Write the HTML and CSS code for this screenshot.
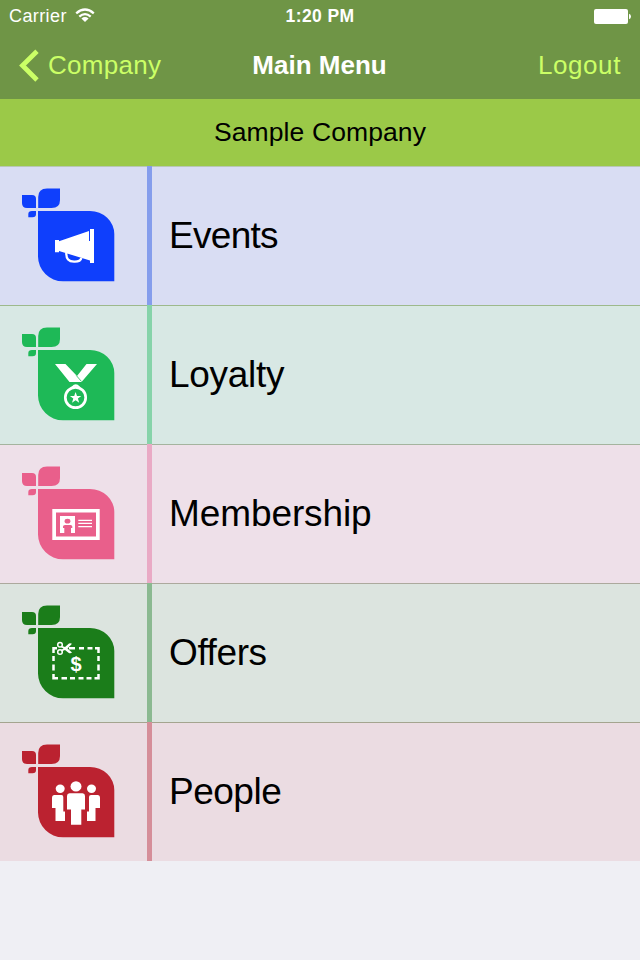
FILE: index.html
```
<!DOCTYPE html>
<html lang="en">
<head>
<meta charset="utf-8">
<title>Main Menu</title>
<link rel="stylesheet" href="styles.css">
</head>
<body>
<svg class="defs" width="0" height="0">
  <symbol id="leaf" viewBox="0 0 147 139">
    <path d="M38 45H90A24.300 23 0 0 1 114.300 68V115.300H63A25 25 0 0 1 38 90.500Z"/>
    <path d="M38.200 42V31Q38.200 22.500 47 22.500H60V34Q60 42 51.500 42Z"/>
    <path d="M22 29H32Q36 29 36 33V42H27Q22 42 22 37Z"/>
    <path d="M28.300 51.200V48Q28.300 45 32 45H36V48Q36 51.200 32.500 51.200Z"/>
  </symbol>
</svg>
<header class="top">
  <div class="status">
    <div class="carrier"><span>Carrier</span>
      <svg width="20" height="15" viewBox="0 0 20 15" fill="none" stroke="#fff" stroke-width="2.300"><path d="M1.200 5.300Q10 -2.300 18.800 5.300M4.300 8.600Q10 3.600 15.700 8.600"/><path d="M6.400 10.400Q10 7.600 13.600 10.400L10 14Z" fill="#fff" stroke="none"/></svg>
    </div>
    <span class="time">1:20 PM</span>
    <svg class="battery" width="38" height="15" viewBox="0 0 38 15" fill="#fff"><rect x="0" y="0" width="34" height="15" rx="2"/><path d="M35 4.800Q37 5.500 37 7.500T35 10.200Z"/></svg>
  </div>
  <nav class="nav">
    <a class="back"><svg width="22" height="34" viewBox="0 0 22 34" fill="none" stroke="#cbff66" stroke-width="4.800"><path d="M19 2.300L4.500 16.500L19 31"/></svg><span>Company</span></a>
    <h1>Main Menu</h1>
    <a class="logout">Logout</a>
  </nav>
</header>
<div class="company"><span>Sample Company</span></div>
<main>
  <section class="row events">
    <svg class="icon" viewBox="0 0 147 139"><use href="#leaf"/>
      <g fill="#fff"><path d="M55 74H59V75.300L89 65V75H90V63H94V97H90V94.500L59 85V86.300H55Z"/><path d="M66.300 87Q66 95.500 74 95.700Q80.500 96 81.300 92" fill="none" stroke="#fff" stroke-width="2.300"/></g>
    </svg><span>Events</span>
  </section>
  <section class="row loyalty">
    <svg class="icon" viewBox="0 0 147 139"><use href="#leaf"/>
      <path fill="#fff" d="M55 59H65.500L77 71L86.500 59H97L81.500 77H69.500Z"/>
      <path d="M76.300 70.500L81.500 76.500" stroke="#1eb957" stroke-width=".8"/>
      <g fill="none" stroke="#fff"><circle cx="75.500" cy="92.500" r="10.200" stroke-width="2.700"/><path d="M72.500 83V82Q75.800 78.500 79 82V83" stroke-width="1.800"/></g>
      <path fill="#fff" d="M75.600 87L77 91H81.300L77.900 93.500L79.200 97.800L75.600 95.200L72 97.800L73.300 93.500L69.900 91H74.200Z"/>
    </svg><span>Loyalty</span>
  </section>
  <section class="row membership">
    <svg class="icon" viewBox="0 0 147 139"><use href="#leaf"/>
      <path fill="#fff" fill-rule="evenodd" d="M52.300 65H99.700V96H52.300ZM56 68.500V92.500H96V68.500Z"/>
      <path fill="#fff" d="M60 72H75V89H60Z"/>
      <ellipse cx="67.500" cy="77.200" rx="2.900" ry="2.400" fill="currentColor"/>
      <path d="M64.300 89V84H63V82.500Q63 80.900 65 80.900H70.500Q72.300 80.900 72.300 82.500V84H71V89Z" fill="currentColor"/>
      <path d="M78.300 76.300H92M78.300 79.300H92M78.300 82.600H92" stroke="#fff" stroke-width="1.300"/>
    </svg><span>Membership</span>
  </section>
  <section class="row offers">
    <svg class="icon" viewBox="0 0 147 139"><use href="#leaf"/>
      <g fill="none" stroke="#fff" stroke-width="2.500">
        <path d="M53.500 70V65.300H57M95 65.300H98.500V70M98.500 91V95.300H94.500M58 95.300H53.500V91"/>
        <path d="M69 65.300H75M79 65.300H84M87.500 65.300H92.500M61.500 95.300H67M70 95.300H75M78.500 95.300H83.500M86.500 95.300H91.500M53.500 73V78M53.500 81.500V87.500M98.500 73V78M98.500 81.500V87.500"/>
      </g>
      <g fill="none" stroke="#fff" stroke-width="1.500"><circle cx="60" cy="61.800" r="2.300"/><circle cx="60" cy="69" r="2.300"/></g>
      <path d="M61.500 62.800L65 64L69 60.500Q70.500 59.800 72 60.800L67.500 65.500L72 69.500Q70.500 71 68.500 69.800L65 67L61.500 68.500L61 67L63.500 65.500L61 64.300Z" fill="#fff"/>
      <text x="76" y="88" text-anchor="middle" fill="#fff">$</text>
    </svg><span>Offers</span>
  </section>
  <section class="row people">
    <svg class="icon" viewBox="0 0 147 139"><use href="#leaf"/>
      <g fill="#fff"><ellipse cx="76" cy="64.400" rx="5.500" ry="5.200"/><ellipse cx="60.200" cy="66.700" rx="4.500" ry="4.200"/><ellipse cx="91.500" cy="66.700" rx="4.500" ry="4.200"/>
      <path d="M69.500 71.300H82.500Q85 71.500 85 74V87.500H81.300V102.700H71V87.500H67V74Q67 71.500 69.500 71.300Z"/>
      <path d="M54.500 73H61.500Q63.300 73 63.300 75V89.500H65V99H55.500V86H52V76Q52 73 54.500 73ZM97.500 73H91Q89 73 89 75V89.500H87V99H95.500V86H100V76Q100 73 97.500 73Z"/></g>
    </svg><span>People</span>
  </section>
</main>
</body>
</html>
```
FILE: styles.css
```
* { box-sizing: border-box; }
body {
  margin: 0;
  min-height: 960px;
  background: #efeff4;
  color: #000;
  font-family: "Liberation Sans", Arial, sans-serif;
}
.defs { position: absolute; }
.top { height: 99px; background: #6f9546; color: #fff; }
.status {
  height: 32px;
  padding: 0 9px;
  display: grid;
  grid-template-columns: 1fr auto 1fr;
  align-items: center;
  font-size: 18px;
}
.carrier { display: flex; align-items: center; gap: 8px; letter-spacing: 0.4px; }
.carrier svg { margin-bottom: 2px; }
.time { font-weight: bold; font-size: 17.5px; letter-spacing: 0.4px; }
.battery { justify-self: end; margin-right: -1px; }
.nav {
  height: 67px;
  padding: 0 19px 0 18px;
  display: grid;
  grid-template-columns: 1fr auto 1fr;
  align-items: center;
  font-size: 26px;
}
.back { display: flex; align-items: center; gap: 8px; color: #cbff66; letter-spacing: 0.3px; }
.logout { justify-self: end; color: #cbff66; letter-spacing: 0.6px; }
h1 { margin: 0; font-size: 26px; }
.company {
  height: 67px;
  display: flex;
  align-items: center;
  justify-content: center;
  background: #9bc948;
  font-size: 26.5px;
  letter-spacing: 0.1px;
}
.row {
  height: 139px;
  display: flex;
  align-items: center;
  border-top: 1px solid #9db98c;
  font-size: 37px;
}
.icon { width: 147px; height: 139px; margin-top: -1px; flex: none; fill: currentColor; }
.icon text { font: bold 20px "Liberation Sans", Arial, sans-serif; }
.row span {
  align-self: stretch;
  flex: 1;
  margin-top: -1px;
  padding-left: 17px;
  border-left: 5px solid;
  color: #000;
  line-height: 140px;
}
.events { background: #d9ddf3; color: #0f3ffc; border-top-color: #b8c7b4; }
.events span { border-color: #859dec; letter-spacing: -0.7px; }
.loyalty { background: #d8e8e4; color: #1eb957; border-top-color: #9db98c; }
.loyalty span { border-color: #86d3a9; letter-spacing: -0.3px; }
.membership { background: #eee0e9; color: #e95f8b; border-top-color: #a4b49e; }
.membership span { border-color: #e9aac5; letter-spacing: -0.1px; }
.offers { background: #dce4df; color: #1b7d1a; border-top-color: #aca99d; }
.offers span { border-color: #8bb991; letter-spacing: -0.4px; }
.people { background: #ebdce2; color: #bb2230; border-top-color: #a4a58f; }
.people span { border-color: #d58e99; letter-spacing: -0.5px; }
```
